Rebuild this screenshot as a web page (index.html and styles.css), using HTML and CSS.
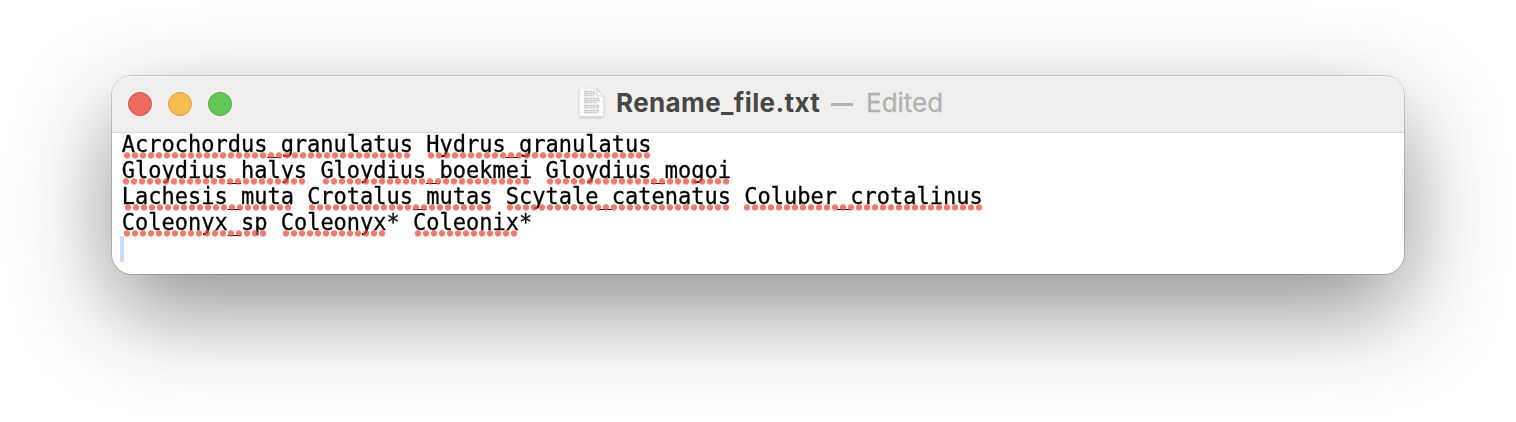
FILE: index.html
```html
<!DOCTYPE html>
<html lang="en">
<head>
<meta charset="utf-8">
<title>Rename_file.txt</title>
<link rel="stylesheet" href="styles.css">
</head>
<body>
<main class="window">
  <header class="titlebar">
    <div class="controls">
      <span class="light close"></span>
      <span class="light minimize"></span>
      <span class="light zoom"></span>
    </div>
    <div class="title">
      <svg class="doc" width="30" height="34" viewBox="0 0 30 34">
        <path class="sheet" d="M2 2.500h15.500l7 8V29a1.500 1.500 0 0 1-1.500 1.500H2A1.500 1.500 0 0 1 .500 29V4A1.500 1.500 0 0 1 2 2.500z"/>
        <path class="lines" d="M5 5.500h11M5 7.500h12M5 9.500h10M5 12.500h15M5 14.500h16M5 16.500h13M5 19.500h15M5 21.500h15M5 24.500h15M5 26.500h14"/>
        <path class="fold" d="M17 2.500c1.500 2 1.500 5 1 7.500 2.500-.5 5 0 6.500 1z"/>
      </svg>
      <span class="name">Rename_file.txt</span>
      <span class="dash"></span>
      <span class="state">Edited</span>
    </div>
  </header>
  <section class="editor">
    <div class="line"><span class="word" style="--dots:36">Acrochordus_granulatus</span> <span class="word" style="--dots:28">Hydrus_granulatus</span></div>
    <div class="line"><span class="word" style="--dots:23">Gloydius_halys</span> <span class="word" style="--dots:26">Gloydius_boekmei</span> <span class="word" style="--dots:23">Gloydius_mogoi</span></div>
    <div class="line"><span class="word" style="--dots:21">Lachesis_muta</span> <span class="word" style="--dots:23">Crotalus_mutas</span> <span class="word" style="--dots:28">Scytale_catenatus</span> <span class="word" style="--dots:30">Coluber_crotalinus</span></div>
    <div class="line"><span class="word" style="--dots:18">Coleonyx_sp</span> <span class="word" style="--dots:13">Coleonyx</span>* <span class="word" style="--dots:13">Coleonix</span>*</div>
    <div class="caret"></div>
  </section>
</main>
</body>
</html>
```
FILE: styles.css
```css
body {
  margin: 0;
  padding: 76px 112px 0;
  height: 346px;
  background: #fff;
  overflow: hidden;
}

.window {
  height: 198px;
  border-radius: 20px;
  background: #fff;
  box-shadow: 0 0 0 1px rgba(0, 0, 0, 0.17), 0 36px 96px rgba(0, 0, 0, 0.44);
}

.titlebar {
  box-sizing: border-box;
  height: 57px;
  display: grid;
  grid-template-columns: 467px 1fr;
  border-bottom: 1px solid #d7d6d5;
  border-radius: 20px 20px 0 0;
  background: #f0efed;
  box-shadow: inset 0 1px #f8f7f6;
}

.controls {
  display: flex;
  align-items: center;
  gap: 16px;
  padding-left: 16px;
}

.light {
  box-sizing: border-box;
  width: 24px;
  height: 24px;
  border: 1px solid;
  border-radius: 50%;
}

.close { background: #ec6a5e; border-color: #d35047; }
.minimize { background: #f4bf4f; border-color: #d8a03c; }
.zoom { background: #64c655; border-color: #50a73f; }

.title {
  display: flex;
  align-items: center;
  height: 54px;
  font: 26px/34px Inter, sans-serif;
  white-space: nowrap;
}

.doc {
  flex: none;
  margin-right: 7px;
  filter: drop-shadow(0 1px 1px rgba(0, 0, 0, 0.25));
}

.sheet { fill: #fafafa; }
.lines { stroke: #cbcbcb; stroke-width: 1.4; stroke-dasharray: 5 0.5 3 0.4 2 0.5; }
.fold { fill: #fff; stroke: #c9c9c9; stroke-width: 0.7; }

.name {
  width: 215px;
  font-weight: 700;
  letter-spacing: 0.38px;
  color: #484745;
}

.dash {
  width: 22px;
  height: 3px;
  margin: 3px 13px 0 0;
  background: #b2b1af;
}

.state {
  color: #b2b1af;
  -webkit-text-stroke: 0.3px #b2b1af;
}

.editor {
  margin-top: -1px;
  padding-left: 9.7px;
  font: 22px/26px "DejaVu Sans Mono", monospace;
  color: #000;
  -webkit-text-stroke: 0.3px #000;
}

.line {
  height: 26px;
  white-space: pre;
  transform: scaleY(1.04);
}

.word {
  position: relative;
}

/* spelling marks, drawn over the glyph descenders */
.word::after {
  content: "";
  position: absolute;
  left: calc(50% - var(--dots) * 4px);
  bottom: -0.5px;
  width: calc(var(--dots) * 8px);
  height: 6px;
  background: radial-gradient(circle at 4px 3px, rgba(235, 77, 61, 0.75) 2.7px, transparent 3.5px) 0 0 / 8px 6px;
}

.caret {
  width: 4px;
  height: 26px;
  margin-left: -1.7px;
  border-radius: 1px;
  background: #ccdcff;
}
```
